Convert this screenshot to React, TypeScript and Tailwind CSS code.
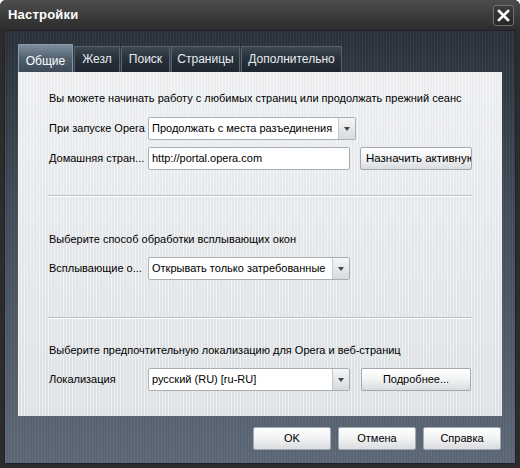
const font = "font-['Liberation_Sans',Tahoma,sans-serif]"

function Select({ value, width }: { value: string; width: string }) {
  return (
    <div className={`flex h-[23px] ${width} shrink-0 items-stretch rounded-[2px] border border-[#a7afb7] bg-white`}>
      <span className="flex-1 overflow-hidden whitespace-nowrap pl-[3px] leading-[21px] text-black">{value}</span>
      <span className="flex w-[17px] items-center justify-center border-l border-[#c3c8cd] bg-gradient-to-b from-[#f4f5f6] to-[#d7dbdf]">
        <span className="h-0 w-0 border-x-[3.5px] border-t-[4px] border-x-transparent border-t-[#444]" />
      </span>
    </div>
  )
}

function Button({ label, className }: { label: string; className: string }) {
  return (
    <div
      className={`flex h-[23px] shrink-0 items-center overflow-hidden whitespace-nowrap rounded-[2px] border border-[#a3a9b0] bg-gradient-to-b from-[#ffffff] via-[#f1f2f3] to-[#d9dcdf] text-black ${className}`}
    >
      {label}
    </div>
  )
}

function Separator() {
  return <div className="h-[2px] w-[424px] border-t border-b border-t-[#b9c0c6] border-b-white" />
}

const tabs = ['Жезл', 'Поиск', 'Страницы', 'Дополнительно']
const tabWidths = ['w-[46px]', 'w-[49px]', 'w-[69px]', 'w-[101px]']

export default function App() {
  return (
    <div className={`flex h-[468px] w-[520px] flex-col rounded-t-[6px] bg-[#2c2c2c] text-[11px] ${font}`}>
      {/* заголовок */}
      <div className="flex h-[30px] items-center justify-between rounded-t-[6px] bg-gradient-to-b from-[#4d4d4d] to-[#2c2c2c] pl-[8px] pr-[6px]">
        <span className="text-[13px] font-bold tracking-[0.2px] text-white">Настройки</span>
        <div className="flex h-[21px] w-[21px] items-center justify-center rounded-[3px] border border-[#707070] bg-gradient-to-b from-[#3c3c3c] to-[#262626]">
          <svg width="13" height="13" viewBox="0 0 13 13">
            <path d="M2 2 L11 11 M11 2 L2 11" stroke="white" strokeWidth="2.6" strokeLinecap="square" />
          </svg>
        </div>
      </div>

      {/* тело окна */}
      <div className="mx-[4px] mb-[4px] flex flex-1 flex-col border border-[#1f2226] bg-[image:repeating-linear-gradient(90deg,rgba(255,255,255,0.05)_0px,rgba(255,255,255,0.05)_1px,transparent_1px,transparent_3px),linear-gradient(to_bottom,#29303a,#404b57_40%,#5b6775)] pl-[13px] pt-[13px]">
        {/* вкладки */}
        <div className="flex h-[28px] items-end">
          <div className="flex h-[28px] w-[55px] items-center justify-center rounded-t-[1px] border border-b-0 border-[#8a9aa8] bg-gradient-to-b from-[#7d8e9d] via-[#51616f] to-[#3d4b57] pt-[4px] text-[12px] text-white">
            Общие
          </div>
          {tabs.map((t, i) => (
            <div
              key={t}
              className={`ml-[1px] flex h-[26px] ${tabWidths[i]} items-center justify-center border border-b-0 border-[#56626d] bg-gradient-to-b from-[#3d4853] via-[#26303a] to-[#1f272f] pb-[2px] text-[12px] text-[#e8ecef]`}
            >
              {t}
            </div>
          ))}
        </div>

        {/* панель */}
        <div className="flex h-[344px] w-[484px] shrink-0 flex-col bg-[image:repeating-linear-gradient(90deg,rgba(255,255,255,0.45)_0px,rgba(255,255,255,0.45)_1px,transparent_1px,transparent_3px),linear-gradient(to_bottom,#ebedef,#dde0e3)] pl-[30px] text-black">
          <div className="mt-[19px] whitespace-nowrap pl-[1px] leading-[14px]">
            Вы можете начинать работу с любимых страниц или продолжать прежний сеанс
          </div>
          <div className="mt-[12px] flex h-[23px] items-center">
            <span className="w-[100px] shrink-0 whitespace-nowrap pl-[1px]">При запуске Opera</span>
            <Select value="Продолжать с места разъединения" width="w-[208px]" />
          </div>
          <div className="mt-[7px] flex h-[23px] items-center">
            <span className="w-[100px] shrink-0 whitespace-nowrap pl-[1px]">Домашняя стран...</span>
            <div className="flex h-[23px] w-[202px] shrink-0 items-center rounded-[2px] border border-[#a7afb7] bg-white pl-[3px]">
              http://portal.opera.com
            </div>
            <Button label="Назначить активную" className="ml-[10px] w-[112px] pl-[5px] text-[11.5px]" />
          </div>
          <div className="mt-[25px]">
            <Separator />
          </div>

          <div className="mt-[35px] whitespace-nowrap pl-[1px] leading-[14px]">Выберите способ обработки всплывающих окон</div>
          <div className="mt-[11px] flex h-[23px] items-center">
            <span className="w-[100px] shrink-0 whitespace-nowrap pl-[1px]">Всплывающие о...</span>
            <Select value="Открывать только затребованные" width="w-[202px]" />
          </div>
          <div className="mt-[37px]">
            <Separator />
          </div>

          <div className="mt-[24px] whitespace-nowrap pl-[1px] leading-[14px]">
            Выберите предпочтительную локализацию для Opera и веб-страниц
          </div>
          <div className="mt-[11px] flex h-[23px] items-center">
            <span className="w-[100px] shrink-0 whitespace-nowrap pl-[1px]">Локализация</span>
            <Select value="русский (RU) [ru-RU]" width="w-[202px]" />
            <Button label="Подробнее..." className="ml-[11px] w-[110px] justify-center" />
          </div>
        </div>

        {/* кнопки */}
        <div className="mt-[11px] flex w-[483px] justify-end gap-[7px]">
          <Button label="OK" className="w-[78px] justify-center" />
          <Button label="Отмена" className="w-[78px] justify-center" />
          <Button label="Справка" className="w-[78px] justify-center" />
        </div>
      </div>
    </div>
  )
}
